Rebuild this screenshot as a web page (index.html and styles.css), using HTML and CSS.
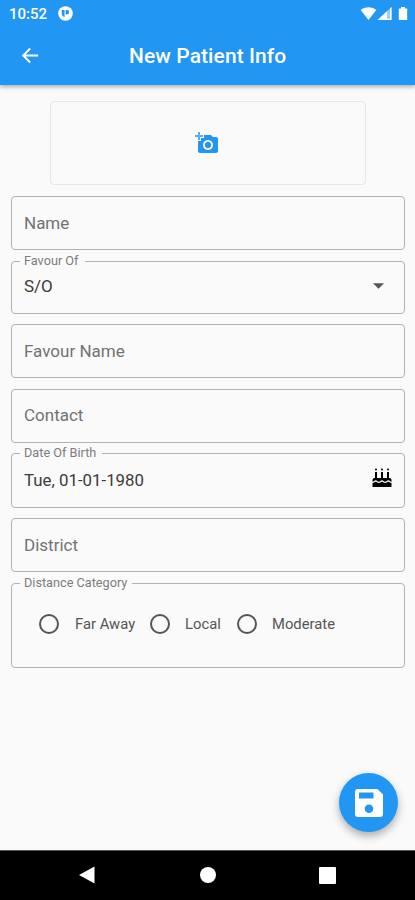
FILE: index.html
```html
<!DOCTYPE html>
<html lang="en">
<head>
<meta charset="utf-8">
<title>New Patient Info</title>
<link rel="stylesheet" href="styles.css">
</head>
<body>
<header class="top">
  <div class="status">
    <span class="clock">10:52</span>
    <svg class="app-dot" viewBox="0 0 16 16"><circle cx="8" cy="8" r="7.8" fill="#fff"/><path d="M4 4.200h3v7.800a4.500 4.500 0 0 1-3-4.500zM8.200 4.200h1.300a2.300 2.300 0 0 1 0 4.800H8.200z" fill="#2196f3"/></svg>
    <svg class="indicators" viewBox="0 0 48 16"><path d="M.7 4C5 .3 12 .3 16.3 4L8.5 14z"/><path d="M31.500 1v13H17.500z" opacity=".55"/><path d="M27 5.200V14h-9.500zM30 2.400 31.500 1v13H27v-1.200h3z"/><path d="M41 1h4v1.600h2.200V14h-8.400V2.600H41z"/></svg>
  </div>
  <div class="appbar">
    <svg class="back" viewBox="0 0 24 24"><path d="M21 11H7.830l5.590-5.590L12 4l-8 8 8 8 1.410-1.410L7.830 13H21z"/></svg>
    <h1>New Patient Info</h1>
  </div>
</header>
<main>
  <div class="photo">
    <svg viewBox="0 0 24 24"><path opacity=".75" d="M3 4V1h2v3h3v2H5v3H3V6H0V4z"/><path d="M6 10V7h3V4h7l1.830 2H21c1.100 0 2 .9 2 2v12c0 1.100-.9 2-2 2H5c-1.100 0-2-.9-2-2V10zm7 9c2.760 0 5-2.240 5-5s-2.240-5-5-5-5 2.240-5 5 2.240 5 5 5zm-3.200-5c0 1.770 1.430 3.200 3.200 3.200s3.200-1.430 3.200-3.200-1.430-3.200-3.200-3.200-3.200 1.430-3.200 3.200z"/></svg>
  </div>
  <div class="field name"><span class="hint">Name</span></div>
  <div class="field favour"><span class="label w-favour">Favour Of</span><span class="value so">S/O</span><svg class="caret" viewBox="0 0 10 5"><path d="M0 0h10L5 5z"/></svg></div>
  <div class="field favour-name"><span class="hint">Favour Name</span></div>
  <div class="field contact"><span class="hint">Contact</span></div>
  <div class="field birth"><span class="label w-birth">Date Of Birth</span><span class="value date">Tue, 01-01-1980</span><svg class="cake" viewBox="0 0 20 20"><path d="M4 0l1 1.500a1 1 0 1 1-2 0zM10 0l1 1.500a1 1 0 1 1-2 0zM16 0l1 1.500a1 1 0 1 1-2 0zM3 4h2v6h4V4h2v6h4V4h2v6h.5a2 2 0 0 1 2 2v1.700c-1.600 0-1.600-1.400-3.200-1.400s-1.600 1.400-3.200 1.400-1.500-1.400-3.100-1.400-1.600 1.400-3.200 1.400-1.500-1.400-3.100-1.400S2.100 13.700.5 13.700V12a2 2 0 0 1 2-2H3z"/><path d="M.5 15c1.600 0 1.600-1.300 3.200-1.300S5.300 15 6.900 15s1.500-1.300 3.100-1.300 1.600 1.300 3.200 1.300 1.500-1.300 3.100-1.300 1.600 1.300 3.200 1.300v4H.5z"/></svg></div>
  <div class="field district"><span class="hint">District</span></div>
  <div class="field distance">
    <span class="label w-distance">Distance Category</span>
    <div class="option far"><i></i><span>Far Away</span></div>
    <div class="option local"><i></i><span>Local</span></div>
    <div class="option moderate"><i></i><span>Moderate</span></div>
  </div>
  <div class="save"><svg viewBox="0 0 28 28"><path fill-rule="evenodd" d="M3 0h19.500L28 5.500V25a3 3 0 0 1-3 3H3a3 3 0 0 1-3-3V3a3 3 0 0 1 3-3zm1 3.500v6h14.500v-6zM14 15.500a4.300 4.300 0 1 0 0 8.600 4.300 4.300 0 0 0 0-8.600z"/></svg></div>
</main>
<nav>
  <svg class="nav-back" viewBox="0 0 16 18"><path d="M15.500.5v17L0 9z"/></svg>
  <span class="nav-home"></span>
  <span class="nav-recent"></span>
</nav>
</body>
</html>
```
FILE: styles.css
```css
* { box-sizing: border-box; }
body {
  margin: 0;
  height: 900px;
  display: flex;
  flex-direction: column;
  overflow: hidden;
  background: #fafafa;
  font-family: Roboto, sans-serif;
  color: #444;
}
svg { display: block; flex: none; }
.top {
  height: 85px;
  flex: none;
  background: #2196f3;
  color: #fff;
  box-shadow: 0 2px 4px rgba(0, 0, 0, .3);
}
.status { height: 28px; display: flex; align-items: center; padding: 0 7px 0 9px; }
.clock { font-size: 15px; font-weight: 500; width: 49px; white-space: nowrap; }
.app-dot { width: 15px; height: 15px; margin-top: -1px; }
.indicators { width: 48px; height: 16px; margin-left: auto; margin-top: -1px; fill: #fff; }
.appbar { height: 57px; display: flex; align-items: center; padding: 0 0 2px 18px; }
.back { width: 23px; height: 23px; fill: #fff; }
h1 { margin: 0 0 0 88px; font-size: 21px; font-weight: 500; letter-spacing: .08px; white-space: nowrap; }
main { flex: 1; display: flex; flex-direction: column; padding: 16px 10px 0 11px; }
.photo {
  width: 316px;
  height: 84px;
  flex: none;
  margin: 0 0 11px 39px;
  padding: 0 3px 0 0;
  border: 1.500px solid #e7e7e7;
  border-radius: 4px;
  display: flex;
  align-items: center;
  justify-content: center;
}
.photo svg { width: 24px; height: 24px; fill: #2196f3; }
.field {
  position: relative;
  flex: none;
  height: 54px;
  margin-bottom: 11px;
  padding: 0 12px;
  border: 1px solid #b2b2b2;
  border-radius: 4px;
  display: flex;
  align-items: center;
  font-size: 17px;
  white-space: nowrap;
}
.favour { height: 53px; margin-bottom: 10px; padding-bottom: 3px; }
.contact { margin-bottom: 10px; padding-bottom: 2px; }
.name { padding-bottom: 1px; }
.birth { height: 55px; margin-bottom: 10px; padding-bottom: 2px; }
.hint { color: #727272; }
.label {
  position: absolute;
  left: 8px;
  top: -9px;
  padding-left: 4px;
  line-height: 16px;
  font-size: 12.700px;
  color: #7d7d7d;
  background: #fafafa;
}
.w-favour { width: 65px; }
.w-birth { width: 82px; }
.w-distance { width: 112px; }
.value { color: #3b3b3b; }
.date { font-size: 16.850px; }
.caret { width: 11px; height: 6px; margin: 0 8px 0 auto; fill: #555; }
.cake { width: 20px; height: 20px; margin: -3px 0 0 auto; fill: #000; }
.distance { height: 85px; padding: 0 0 3px 27px; font-size: 14.800px; }
.option { display: flex; align-items: center; color: #555; }
.option i { width: 20px; height: 20px; border: 2px solid #555; border-radius: 50%; margin-right: 16px; }
.far { width: 111px; }
.local { width: 87px; }
.local i { margin-right: 15px; }
.moderate i { margin-right: 15px; }
.save {
  width: 59px;
  height: 59px;
  margin: 94px 7px 0 auto;
  flex: none;
  border-radius: 50%;
  background: #2196f3;
  box-shadow: 0 4px 8px rgba(0, 0, 0, .32);
  display: flex;
  align-items: center;
  justify-content: center;
}
.save svg { width: 28px; height: 28px; fill: #fff; }
nav {
  height: 50px;
  flex: none;
  display: flex;
  align-items: center;
  padding: 0 0 1px 79px;
  background: #000;
  border-top: 1px solid #555;
}
.nav-back { width: 16px; height: 18px; fill: #fff; }
.nav-home { width: 16px; height: 16px; margin-left: 105px; border-radius: 50%; background: #fff; }
.nav-recent { width: 17px; height: 17px; margin-left: 103px; border-radius: 1px; background: #fff; }
```
